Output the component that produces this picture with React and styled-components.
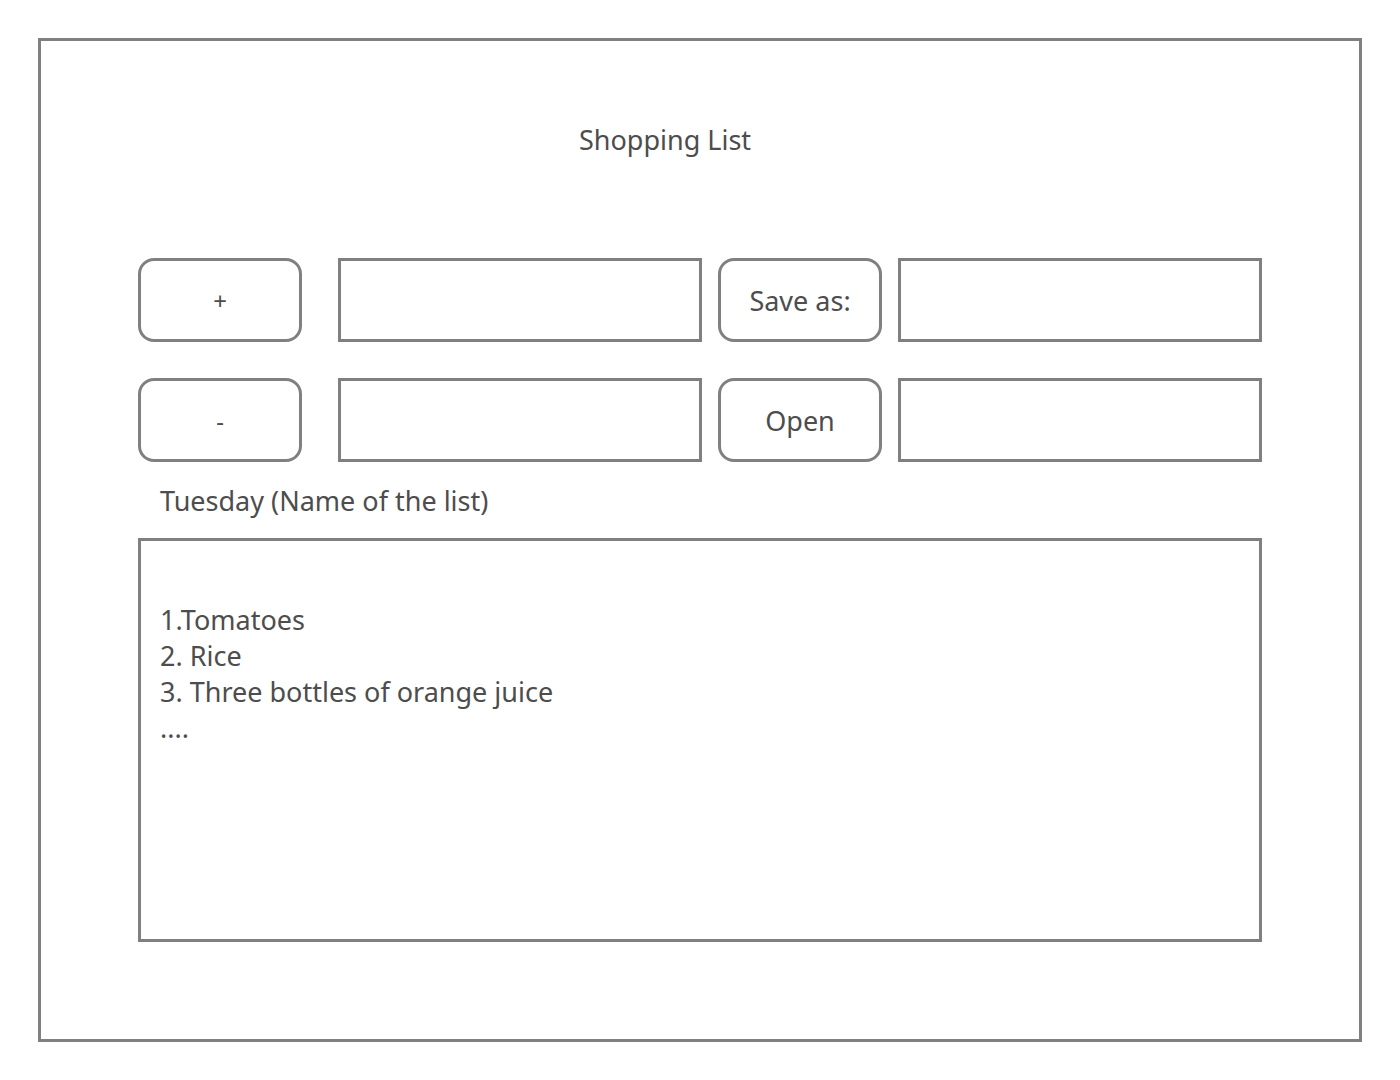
import React from 'react'
import styled, { createGlobalStyle } from 'styled-components'

const items = ['1.Tomatoes', '2. Rice', '3. Three bottles of orange juice', '....']

function App() {
  return (
    <>
      <GlobalStyle />
      <SCFrame>
        <SCTitle>Shopping List</SCTitle>
        <SCControls>
          <SCRow>
            <SCButton small>+</SCButton>
            <SCField />
            <SCButton>Save as:</SCButton>
            <SCField />
          </SCRow>
          <SCRow>
            <SCButton small>-</SCButton>
            <SCField />
            <SCButton>Open</SCButton>
            <SCField />
          </SCRow>
        </SCControls>
        <SCListName>Tuesday (Name of the list)</SCListName>
        <SCListBox>
          {items.map((item) => (
            <SCItem key={item}>{item}</SCItem>
          ))}
        </SCListBox>
      </SCFrame>
    </>
  )
}

export default App

const GlobalStyle = createGlobalStyle`
  body {
    margin: 0;
    background: #ffffff;
    font-family: 'Noto Sans', 'Open Sans', sans-serif;
    color: #4d4d4d;
  }
`

const SCFrame = styled.div`
  box-sizing: border-box;
  margin: 38px;
  width: 1324px;
  height: 1004px;
  border: 3px solid #808080;
  padding: 82px 0 0 97px;
  display: flex;
  flex-direction: column;
`

const SCTitle = styled.h1`
  margin: 0 0 102px 0;
  width: 1054px;
  text-align: center;
  font-size: 27px;
  font-weight: 400;
  line-height: 33px;
`

const SCControls = styled.div`
  display: flex;
  flex-direction: column;
  gap: 36px;
`

const SCRow = styled.div`
  display: flex;
  gap: 16px;
  & > :first-child {
    margin-right: 20px;
  }
`

const SCButton = styled.button`
  box-sizing: border-box;
  width: 164px;
  height: 84px;
  border: 3px solid #808080;
  border-radius: 16px;
  background: #ffffff;
  color: #4d4d4d;
  font-family: 'Noto Sans', 'Open Sans', sans-serif;
  font-size: ${(props) => (props.small ? '24px' : '27px')};
  padding: 0;
`

const SCField = styled.div`
  box-sizing: border-box;
  width: 364px;
  height: 84px;
  border: 3px solid #808080;
  background: #ffffff;
`

const SCListName = styled.div`
  margin: 22px 0 21px 22px;
  font-size: 27px;
  line-height: 33px;
`

const SCListBox = styled.div`
  box-sizing: border-box;
  width: 1124px;
  height: 404px;
  border: 3px solid #808080;
  padding: 61px 0 0 19px;
`

const SCItem = styled.div`
  font-size: 27px;
  line-height: 36px;
`
